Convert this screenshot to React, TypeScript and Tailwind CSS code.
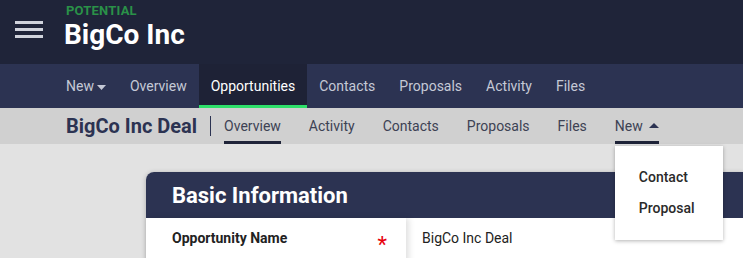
import { useState } from "react";

const topNav = ["Overview", "Opportunities", "Contacts", "Proposals", "Activity", "Files"];
const subTabs = ["Overview", "Activity", "Contacts", "Proposals", "Files"];

export default function App() {
  const [active] = useState("Opportunities");

  return (
    <div className="w-[743px] h-[258px] overflow-hidden bg-[#e2e2e2] font-['Roboto',sans-serif]">
      {/* Header */}
      <header className="h-16 bg-[#1f2439] flex items-start">
        <button className="mt-[21px] ml-[15px] w-7 flex flex-col gap-1">
          <span className="block h-[3px] w-full bg-[#d0d3dc]" />
          <span className="block h-[3px] w-full bg-[#d0d3dc]" />
          <span className="block h-[3px] w-full bg-[#d0d3dc]" />
        </button>
        <div className="ml-[23px] pt-[3px]">
          <div className="text-[13px] font-bold leading-4 text-[#2a9148] tracking-[0.2px]">POTENTIAL</div>
          <div className="text-[28px] font-bold leading-8 text-white -ml-[2px]">BigCo Inc</div>
        </div>
      </header>

      {/* Main nav */}
      <nav className="h-11 bg-[#2c3352] flex pl-[54px] text-sm">
        <div className="px-3 flex items-center gap-[3px] text-[#c5c9d6]">
          New
          <svg width="9" height="5" viewBox="0 0 9 5" className="mt-[3px]">
            <path d="M0 0h9L4.5 5z" fill="#c5c9d6" />
          </svg>
        </div>
        {topNav.map((item) => (
          <div
            key={item}
            className={
              item === active
                ? "px-3 flex items-center bg-[#1e2236] text-white border-b-[3px] border-[#2ee06a] pt-[3px]"
                : "px-3 flex items-center text-[#c5c9d6]"
            }
          >
            {item}
          </div>
        ))}
      </nav>

      {/* Sub bar */}
      <div className="h-9 bg-[#d0d0d0] flex items-stretch pl-[66px]">
        <div className="flex items-center text-xl font-bold text-[#2c3352]">BigCo Inc Deal</div>
        <div className="w-px h-5 bg-[#2c3352] self-center ml-[13px] mr-[13px]" />
        <div className="flex gap-[28px] text-sm text-[#3d4254]">
          {subTabs.map((tab) => (
            <div
              key={tab}
              className={
                tab === "Overview"
                  ? "flex items-center border-b-[3px] border-[#1f2439] pt-[2px]"
                  : "flex items-center pb-[1px]"
              }
            >
              {tab}
            </div>
          ))}
          <div className="relative flex items-center gap-[6px] border-b-[3px] border-[#1f2439] pt-[2px]">
            New
            <svg width="10" height="5" viewBox="0 0 10 5">
              <path d="M0 5h10L5 0z" fill="#2c3352" />
            </svg>
            <div className="absolute left-0 top-[38px] w-[108px] bg-white shadow-[0_1px_4px_rgba(0,0,0,0.3)] pt-[15px] pb-[17px] z-10">
              <div className="px-6 h-[31px] flex items-center text-sm font-medium text-[#2a2a2a]">Contact</div>
              <div className="px-6 h-[31px] flex items-center text-sm font-medium text-[#2a2a2a]">Proposal</div>
            </div>
          </div>
        </div>
      </div>

      {/* Content */}
      <div className="pl-[146px] pt-7">
        <div className="bg-white rounded-tl-lg shadow-[0_1px_5px_rgba(0,0,0,0.25)]">
          <div className="h-[46px] bg-[#2c3352] rounded-tl-lg flex items-center px-[26px]">
            <h2 className="text-[22px] font-bold text-white">Basic Information</h2>
          </div>
          <div className="flex h-[60px]">
            <div className="w-[260px] relative z-[1] bg-white shadow-[3px_0_6px_rgba(0,0,0,0.12)] flex items-start pt-[10px] pl-[26px] pr-[19px] justify-between">
              <span className="text-sm font-bold text-[#222]">Opportunity Name</span>
              <span className="text-red-600 text-[22px] leading-none mt-[6px]">*</span>
            </div>
            <div className="flex-1 pl-4 pt-[10px] text-sm text-[#222]">BigCo Inc Deal</div>
          </div>
        </div>
      </div>
    </div>
  );
}
